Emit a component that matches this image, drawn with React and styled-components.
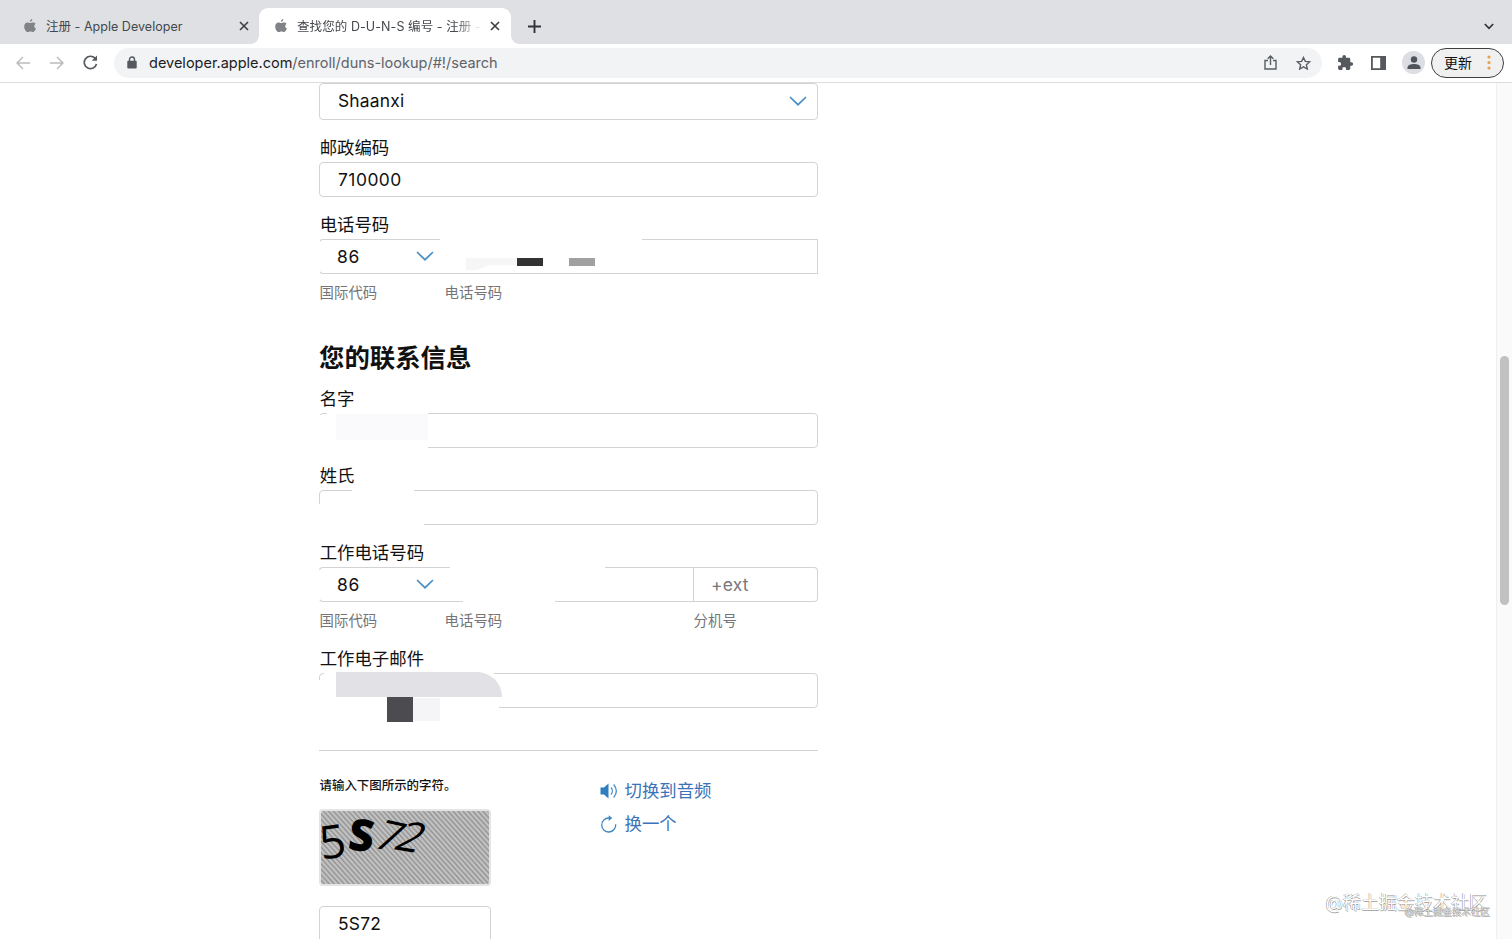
import styled, { createGlobalStyle } from "styled-components";

const GlobalStyle = createGlobalStyle`
  * {
    box-sizing: border-box;
  }

  body {
    margin: 0;
    overflow: hidden;
    background: #fff;
    color: #111;
    font-family: Inter, "Noto Sans CJK SC", sans-serif;
  }
`;

const AppleIcon = () => (
  <svg width="12" height="14" viewBox="0 0 12 14" fill="#808285">
    <path d="M8.3 0c.1 1.4-1 2.8-2.4 2.9C5.7 1.6 6.9.2 8.3 0zM11.5 4.7c-1.9 1.2-1.7 3.9.4 4.8-.5 1.5-1.7 3.6-2.9 3.6-.9 0-1.4-.6-2.5-.6s-1.6.6-2.5.6C2.2 13.2.2 10.2.2 7.4c0-2.6 1.7-4 3.3-4 1.1 0 1.9.7 2.7.7.7 0 1.7-.8 3-.7.9 0 1.8.5 2.3 1.3z" />
  </svg>
);

const CloseIcon = () => (
  <svg width="10" height="10" viewBox="0 0 10 10" stroke="#3c4043" strokeWidth="1.6">
    <path d="M1 1l8 8M9 1L1 9" />
  </svg>
);

const Chevron = () => (
  <svg width="18" height="10" viewBox="0 0 18 10" fill="none" stroke="#4a90c8" strokeWidth="1.7">
    <path d="M1 1l8 7.7L17 1" />
  </svg>
);

const App = () => {
  return (
    <Browser>
      <GlobalStyle />
      <TabStrip>
        <Tab>
          <AppleIcon />
          <TabTitle>注册 - Apple Developer</TabTitle>
          <CloseIcon />
        </Tab>
        <Tab active>
          <AppleIcon />
          <TabTitle fade>查找您的 D-U-N-S 编号 - 注册 -</TabTitle>
          <CloseIcon />
        </Tab>
        <NewTab>
          <svg width="13" height="13" viewBox="0 0 13 13" stroke="#303338" strokeWidth="1.9">
            <path d="M6.5 0v13M0 6.5h13" />
          </svg>
        </NewTab>
        <TabSearch>
          <svg width="10" height="7" viewBox="0 0 10 7" fill="none" stroke="#303338" strokeWidth="1.7">
            <path d="M.8 1L5 5.3 9.2 1" />
          </svg>
        </TabSearch>
      </TabStrip>

      <Toolbar>
        <NavIcons>
          <svg width="14" height="14" viewBox="0 0 14 14" fill="none" stroke="#babcbe" strokeWidth="1.5">
            <path d="M14 7H1.2M7 1L1 7l6 6" />
          </svg>
          <svg width="14" height="14" viewBox="0 0 14 14" fill="none" stroke="#babcbe" strokeWidth="1.5">
            <path d="M0 7h12.8M7 1l6 6-6 6" />
          </svg>
          <svg width="15" height="15" viewBox="0 0 15 15" fill="none" stroke="#55585c" strokeWidth="1.7">
            <path d="M13.5 9A6.2 6.2 0 1 1 12 3.2l1.2 1.2" />
            <path d="M14 .6v5.2H8.8z" fill="#55585c" stroke="none" />
          </svg>
        </NavIcons>
        <AddressBar>
          <svg width="10" height="13" viewBox="0 0 10 13">
            <path d="M2.5 6V3.5a2.5 2.5 0 0 1 5 0V6" fill="none" stroke="#55585c" strokeWidth="1.4" />
            <rect x="0.3" y="4.8" width="9.4" height="7.7" rx="1" fill="#55585c" />
          </svg>
          <Url>
            <b>developer.apple.com</b>/enroll/duns-lookup/#!/search
          </Url>
          <svg width="13" height="15" viewBox="0 0 13 15" fill="none" stroke="#5a5d61" strokeWidth="1.4">
            <path d="M4 5.5H1V14h11V5.5H9M6.5 10V1.2M3.7 3.7L6.500 1l2.800 2.700" />
          </svg>
          <svg width="15" height="14" viewBox="0 0 15 14" fill="none" stroke="#5a5d61" strokeWidth="1.4">
            <path d="M7.5 1.5l1.8 3.9 4.3.5-3.2 2.9.9 4.2-3.8-2.1L3.700 13l.9-4.200-3.200-2.900 4.300-.5z" />
          </svg>
        </AddressBar>
        <Extensions>
          <svg width="20" height="20" viewBox="0 0 24 24" fill="#55585c">
            <path d="M20.5 11H19V7a2 2 0 0 0-2-2h-4V3.5a2.5 2.5 0 0 0-5 0V5H4a2 2 0 0 0-2 2v3.8h1.5a2.7 2.7 0 0 1 0 5.4H2V20a2 2 0 0 0 2 2h3.8v-1.500a2.700 2.700 0 0 1 5.400 0V22H17a2 2 0 0 0 2-2v-4h1.500a2.500 2.500 0 0 0 0-5z" transform="translate(2 1.5) scale(.86)" />
          </svg>
          <svg width="15" height="14" viewBox="0 0 15 14">
            <path fill="#55585c" fillRule="evenodd" d="M0 0h15v14H0zM1.8 1.8v10.4h7.4V1.8z" />
          </svg>
          <Avatar>
            <svg width="14" height="14" viewBox="0 0 14 14" fill="#50545c">
              <circle cx="7" cy="3.5" r="3.2" />
              <path d="M.5 13v-1.500C.5 9 4 8 7 8s6.500 1 6.500 3.500V13z" />
            </svg>
          </Avatar>
        </Extensions>
        <UpdateButton>
          <span>更新</span>
          <svg width="4" height="15" viewBox="0 0 4 15" fill="#e8a04c">
            <circle cx="2" cy="2" r="1.6" />
            <circle cx="2" cy="7.5" r="1.6" />
            <circle cx="2" cy="13" r="1.6" />
          </svg>
        </UpdateButton>
      </Toolbar>

      <Page>
        <Form>
          <Row>
            <Input height={37}>
              Shaanxi
              <Chevron />
            </Input>
          </Row>

          <Label>邮政编码</Label>
          <Row>
            <Input digits>710000</Input>
          </Row>

          <Label>电话号码</Label>
          <Row>
            <Input code>
              86
              <Chevron />
            </Input>
            <Input joined square />
            <Patch x={-1} y={1} w={2} h={33} />
            <Patch x={121} y={-2} w={202} h={34} />
            <Patch x={147} y={19} w={52} h={12} color="#f6f6f6" fade />
            <Patch x={198} y={19} w={26} h={8} color="#333" />
            <Patch x={250} y={19} w={26} h={8} color="#a0a0a0" />
          </Row>
          <Hints>
            <span>国际代码</span>
            <span>电话号码</span>
          </Hints>

          <h2>您的联系信息</h2>

          <Label>名字</Label>
          <Row>
            <Input />
            <Patch x={-1} y={2} w={12} h={34} />
            <Patch x={8} y={-1} w={101} h={37} />
            <Patch x={17} y={1} w={92} h={26} color="#fafafc" />
          </Row>

          <Label>姓氏</Label>
          <Row>
            <Input />
            <Patch x={33} y={-2} w={62} h={20} />
            <Patch x={-1} y={14} w={106} h={22} />
          </Row>

          <Label>工作电话号码</Label>
          <Row>
            <Input code>
              86
              <Chevron />
            </Input>
            <Input joined square />
            <Input joined ext>
              +ext
            </Input>
            <Patch x={-1} y={3} w={2} h={30} />
            <Patch x={121} y={3} w={20} h={29} />
            <Patch x={131} y={-2} w={155} h={31} />
            <Patch x={144} y={26} w={92} h={11} />
          </Row>
          <Hints>
            <span>国际代码</span>
            <span>电话号码</span>
            <span>分机号</span>
          </Hints>

          <EmailLabel>工作电子邮件</EmailLabel>
          <Row>
            <Input />
            <Patch x={-1} y={7} w={181} h={30} />
            <Patch x={5} y={-1} w={170} h={16} />
            <Patch x={17} y={-1} w={166} h={25} color="#e1e1e6" radius="0 25px 0 0" />
            <Patch x={68} y={24} w={26} h={25} color="#4c4c50" />
            <Patch x={94} y={25} w={27} h={23} color="#f5f5f7" />
          </Row>

          <Divider />

          <Captcha>
            <div>
              <CaptchaTitle>请输入下图所示的字符。</CaptchaTitle>
              <CaptchaImage>
                <Char x={-2} y={6} size={46} rotate={-8}>5</Char>
                <Char x={28} y={1} size={44} rotate={7} bold>S</Char>
                <Char x={58} y={3} size={42} rotate={12} skew={-15}>7</Char>
                <Char x={79} y={4} size={42} rotate={9} skew={-20}>2</Char>
              </CaptchaImage>
              <Input height={37}>5S72</Input>
            </div>
            <CaptchaActions>
              <a>
                <svg width="19" height="16" viewBox="0 0 19 16" fill="none" stroke="#4a90c8" strokeWidth="1.3">
                  <path d="M.5 4.5H4l4.500-4v15L4 11.500H.5z" fill="#2f7fc0" stroke="none" />
                  <path d="M11 4.500c1.800 2 1.800 5 0 7M13.700 1.500c3.300 4 3.300 9 0 13" />
                </svg>
                切换到音频
              </a>
              <a>
                <svg width="19" height="18" viewBox="0 0 19 18" fill="none" stroke="#3d87c3" strokeWidth="1.3">
                  <path d="M15.7 9.3A7 7 0 1 1 8.700 3h2.500" />
                  <path d="M8.7.3l3.500 2.700-3.500 2.900z" fill="#3d87c3" stroke="none" />
                </svg>
                换一个
              </a>
            </CaptchaActions>
          </Captcha>
        </Form>
        <Scrollbar>
          <Thumb />
        </Scrollbar>
        <Watermark>@稀土掘金技术社区</Watermark>
        <Watermark small>@稀土掘金技术社区</Watermark>
      </Page>
    </Browser>
  );
};

const Browser = styled.div`
  display: flex;
  flex-direction: column;
  width: 1512px;
  height: 939px;
  overflow: hidden;
`;

const TabStrip = styled.div`
  display: flex;
  align-items: flex-end;
  height: 44px;
  background: #dee0e3;
`;

const Tab = styled.div.withConfig({ shouldForwardProp: (prop) => prop !== "active" })`
  position: relative;
  display: flex;
  align-items: center;
  width: ${(props) => (props.active ? 252 : 259)}px;
  height: 36px;
  padding: 0 ${(props) => (props.active ? "11.5px 0 15.5px" : "10.5px 0 23.5px")};
  border-radius: 9px 9px 0 0;
  background: ${(props) => (props.active ? "#fff" : "transparent")};

  > svg {
    flex: none;
  }

  &::before,
  &::after {
    content: "";
    display: ${(props) => (props.active ? "block" : "none")};
    position: absolute;
    bottom: 0;
    width: 8px;
    height: 8px;
  }

  &::before {
    right: 100%;
    background: radial-gradient(circle at 0 0, transparent 7.5px, #fff 8px);
  }

  &::after {
    left: 100%;
    background: radial-gradient(circle at 100% 0, transparent 7.5px, #fff 8px);
  }
`;

const TabTitle = styled.span.withConfig({ shouldForwardProp: (prop) => prop !== "fade" })`
  flex: 1;
  margin: 0 5px 0 10.5px;
  padding-bottom: 2px;
  color: #45484c;
  font-size: 12.5px;
  letter-spacing: ${(props) => (props.fade ? "0.08px" : "0.03px")};
  white-space: nowrap;
  mask-image: ${(props) => (props.fade ? "linear-gradient(90deg, #000 84%, transparent 98%)" : "none")};
`;

const NewTab = styled.div`
  display: flex;
  align-items: center;
  height: 36px;
  margin-left: 17px;
`;

const TabSearch = styled.div`
  display: flex;
  align-items: center;
  height: 36px;
  margin: 0 18px 0 auto;
`;

const Toolbar = styled.div`
  display: flex;
  align-items: center;
  flex: none;
  height: 39px;
  padding: 0 8px 1px 16px;
  border-bottom: 1px solid #dcdcde;
`;

const NavIcons = styled.div`
  display: flex;
  align-items: center;
  gap: 19.5px;
  flex: 0 0 98px;
`;

const AddressBar = styled.div`
  display: flex;
  align-items: center;
  flex: 0 0 1208px;
  height: 30px;
  padding: 0 11px 0 13px;
  border-radius: 15px;
  background: #f2f3f5;

  svg:last-child {
    margin-left: 19px;
  }
`;

const Url = styled.span`
  flex: 1;
  margin-left: 12px;
  color: #606368;
  font-size: 14.5px;

  b {
    color: #202124;
    font-weight: 400;
  }
`;

const Extensions = styled.div`
  display: flex;
  align-items: center;
  gap: 16px;
  flex: 0 0 109px;
  padding-left: 13px;
`;

const Avatar = styled.div`
  display: flex;
  align-items: center;
  justify-content: center;
  flex: none;
  width: 23px;
  height: 23px;
  border-radius: 50%;
  background: #dcdee3;
`;

const UpdateButton = styled.div`
  display: flex;
  align-items: center;
  justify-content: space-between;
  flex: 0 0 73px;
  height: 30px;
  padding: 0 12px;
  border: 1.5px solid #3c4043;
  border-radius: 15px;
  background: #f0f0f1;
  font-size: 14px;

  span {
    padding-bottom: 2px;
  }
`;

const Page = styled.div`
  position: relative;
  display: flex;
  flex: 1;
  justify-content: space-between;
  overflow: hidden;
`;

const Form = styled.div`
  width: 499px;
  margin-left: 319px;

  h2 {
    margin: 36px 0 9px;
    font-size: 25.4px;
    font-weight: 600;
    line-height: 36px;
  }
`;

const Label = styled.div`
  padding: 14px 0 0 0.7px;
  font-size: 17.4px;
  line-height: 27px;
  height: 42px;

  h2 + & {
    height: 28px;
    padding-top: 0;
  }
`;

const EmailLabel = styled(Label)`
  height: 41px;
  padding-top: 13px;
`;

const Row = styled.div`
  position: relative;
  display: flex;
`;

const Input = styled.div.withConfig({
  shouldForwardProp: (prop) => !["height", "code", "joined", "ext", "square", "digits"].includes(prop),
})`
  display: flex;
  align-items: center;
  justify-content: space-between;
  flex: ${(props) => (props.code ? "0 0 125px" : props.ext ? "0 0 124px" : 1)};
  height: ${(props) => props.height || 35}px;
  padding: 0 10px ${(props) => (props.height ? 2 : 1)}px ${(props) => (props.ext ? 17 : 18)}px;
  border: 1px solid #d3d3d5;
  border-radius: 4px;
  color: ${(props) => (props.ext ? "#77787a" : "#111")};
  font-size: 17.4px;
  letter-spacing: ${(props) => (props.digits ? 0.5 : 0.2)}px;

  ${(props) =>
    props.code &&
    `
    padding: 0 10px 1px 17px;
    border-right: none;
    border-radius: 4px 0 0 4px;
    letter-spacing: 0.8px;
  `}
  ${(props) => props.joined && `border-radius: ${props.square ? "0" : "0 4px 4px 0"}; border-left: none;`}
`;

/* covers private values */
const Patch = styled.div.withConfig({
  shouldForwardProp: (prop) => !["x", "y", "w", "h", "color", "radius", "fade"].includes(prop),
})`
  position: absolute;
  left: ${(props) => props.x}px;
  top: ${(props) => props.y}px;
  width: ${(props) => props.w}px;
  height: ${(props) => props.h}px;
  border-radius: ${(props) => props.radius || 0};
  background: ${(props) => props.color || "#fff"};
  clip-path: ${(props) => (props.fade ? "polygon(0 0, 100% 0, 100% 60%, 45% 60%, 20% 100%, 0 100%)" : "none")};
`;

const Hints = styled.div`
  display: grid;
  grid-template-columns: 125px 249px 125px;
  height: 30px;
  padding: 8px 0 0 0.6px;
  color: #757577;
  font-size: 14.4px;
  line-height: 22px;
`;

const Divider = styled.div`
  height: 1px;
  margin-top: 42px;
  background: #d3d3d5;
`;

const Captcha = styled.div`
  display: flex;
`;

const CaptchaTitle = styled.div`
  margin-top: 25px;
  padding: 0 0 1px 0.5px;
  font-size: 12.45px;
  font-weight: 500;
  line-height: 20px;
`;

const CaptchaImage = styled.div`
  position: relative;
  width: 172px;
  height: 77px;
  margin: 12px 0 20px;
  border: 2px solid #e4e4e4;
  border-radius: 4px;
  background: repeating-linear-gradient(48deg, #c0c0c0 0 1.3px, #989898 2.2px 2.8px, #c0c0c0 3.7px);
`;

const Char = styled.span.withConfig({
  shouldForwardProp: (prop) => !["x", "y", "size", "rotate", "skew", "bold"].includes(prop),
})`
  position: absolute;
  left: ${(props) => props.x}px;
  top: ${(props) => props.y}px;
  color: #000;
  font-family: "Open Sans", "DejaVu Sans", sans-serif;
  font-size: ${(props) => props.size}px;
  font-weight: ${(props) => (props.bold ? 800 : 400)};
  line-height: 1;
  transform: rotate(${(props) => props.rotate}deg) skewX(${(props) => props.skew || 0}deg);
`;

const CaptchaActions = styled.div`
  display: flex;
  flex-direction: column;
  gap: 7px;
  margin: 27px 0 0 109px;

  a {
    display: flex;
    align-items: center;
    gap: 5.5px;
    color: #3b73b9;
    font-size: 17.4px;
    line-height: 26px;
  }
`;

const Scrollbar = styled.div`
  width: 16px;
  padding: 273px 3px 0;
  border-left: 1px solid #efefef;
  background: #fafafa;
`;

const Thumb = styled.div`
  width: 9px;
  height: 249px;
  border-radius: 5px;
  background: #c1c1c1;
`;

const Watermark = styled.div.withConfig({ shouldForwardProp: (prop) => prop !== "small" })`
  position: absolute;
  right: ${(props) => (props.small ? 22 : 25)}px;
  bottom: ${(props) => (props.small ? 20 : 23)}px;
  color: ${(props) => (props.small ? "#dcdcdc" : "#fff")};
  font-size: ${(props) => (props.small ? 9.5 : 18)}px;
  line-height: ${(props) => (props.small ? 14 : 26)}px;
  text-shadow: -0.5px -0.5px 0.5px #888, 0.5px 0.5px 0.5px #aaa;
  white-space: nowrap;
`;

export default App;
